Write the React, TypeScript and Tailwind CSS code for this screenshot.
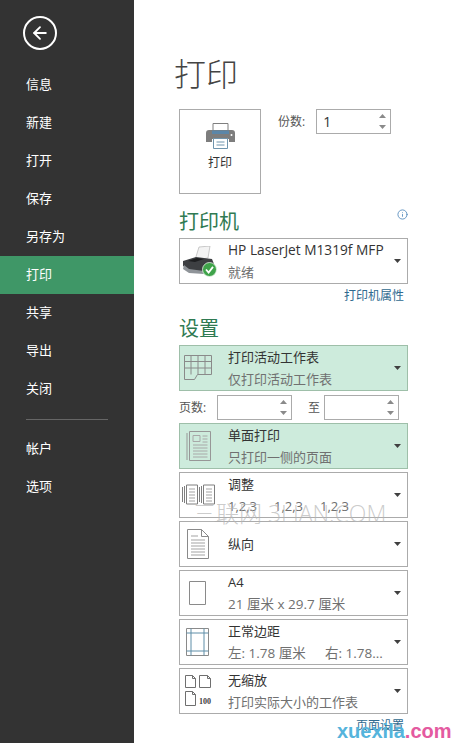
import { ReactNode } from 'react';
import { ArrowLeft, Info } from 'lucide-react';

const menuTop = ['信息', '新建', '打开', '保存', '另存为', '打印', '共享', '导出', '关闭'];
const menuBottom = ['帐户', '选项'];

function Caret({ className = '' }: { className?: string }) {
  return (
    <svg width="7" height="4" viewBox="0 0 7 4" className={className}>
      <path d="M0 0h7L3.5 4z" fill="#404040" />
    </svg>
  );
}

function Spinner() {
  return (
    <div className="flex flex-col items-center gap-[7px]">
      <svg width="7" height="4" viewBox="0 0 7 4"><path d="M3.5 0L7 4H0z" fill="#8a8a8a" /></svg>
      <svg width="7" height="4" viewBox="0 0 7 4"><path d="M0 0h7L3.5 4z" fill="#8a8a8a" /></svg>
    </div>
  );
}

function NumberBox({ value, className }: { value?: string; className: string }) {
  return (
    <div className={`flex h-[25px] items-center justify-between border border-[#ababab] bg-white pl-[6px] pr-[4px] text-[14px] text-[#333] ${className}`}>
      <span>{value}</span>
      <Spinner />
    </div>
  );
}

const line = '#8a8a8a';

function GridIcon() {
  return (
    <svg width="30" height="30" viewBox="0 0 30 30" fill="none" stroke={line}>
      <path d="M1.5 2.5h27v19h-14l-3 5h-10z M1.5 8.5h27 M1.5 15h27 M8 2.5v19 M15 2.5v19 M22 2.5v19" />
    </svg>
  );
}

function PagesIcon() {
  return (
    <svg width="26" height="32" viewBox="0 0 26 32" fill="none" stroke="#979797">
      <path d="M1 3v27 M3.5 1.5h21v29h-21z" />
      <path d="M7 5.5h7v6H7z M16.5 6h5 M16.5 9h5 M16.5 12h5 M7 15h14.5 M7 18h14.5 M7 21h14.5 M7 24h14.5 M7 27h14.5" stroke="#a8a8a8" />
    </svg>
  );
}

function StackedIcon() {
  return (
    <svg width="33" height="22" viewBox="0 0 33 22" fill="none" stroke="#7f7f7f">
      <path d="M.5 3v15 M2.5 2v17 M4.5 1h11v19h-11z M17.5 3v15 M19.5 2v17 M21.5 1h11v19h-11z" />
      <path d="M7 5h6 M7 8h6 M7 11h6 M7 14h6 M7 17h6 M24 5h6 M24 8h6 M24 11h6 M24 14h6 M24 17h6" stroke="#a3a3a3" />
    </svg>
  );
}

function PortraitIcon() {
  return (
    <svg width="22" height="30" viewBox="0 0 22 30" fill="none" stroke={line}>
      <path d="M.5.5h14l7 7v22H.5z M14.5.5v7h7" />
      <path d="M4 7h7 M4 11h14 M4 14h14 M4 17h14 M4 20h14 M4 23h14 M4 26h14" stroke="#a3a3a3" />
    </svg>
  );
}

function SheetIcon() {
  return (
    <svg width="17" height="24" viewBox="0 0 17 24" fill="none" stroke={line}>
      <path d="M.5.5h16v23H.5z" />
    </svg>
  );
}

function MarginIcon() {
  return (
    <svg width="23" height="28" viewBox="0 0 23 28" fill="none">
      <path d="M.5.5h22v27H.5z" stroke={line} />
      <path d="M5 .5v27 M18 .5v27 M.5 5h22 M.5 23h22" stroke="#5f8ea8" />
    </svg>
  );
}

function NoScaleIcon() {
  return (
    <div className="relative h-[32px] w-[29px]">
      <svg width="27" height="32" viewBox="0 0 27 32" fill="none" stroke="#6f6f6f">
        <path d="M.5.5h7l3 3v9H.5z M7.5.5v3h3 M14.5.5h8l3 3v9h-11z M22.5.5v3h3 M.5 16.5h7l3 3v11H.5z M7.5 16.5v3h3" />
      </svg>
      <span className="absolute bottom-[-1px] left-[14px] font-['Liberation_Serif',serif] text-[8px] font-bold text-[#404040]">100</span>
    </div>
  );
}

function PrinterPhoto() {
  return (
    <svg width="36" height="31" viewBox="0 0 36 31">
      <path d="M17 1l11-1-2 12-13 2z" fill="#f3f3f3" stroke="#b5b5b5" strokeWidth=".7" />
      <path d="M1 15l13-4 16 2 2 5-10 8-14-2-7-4z" fill="#3d3f42" />
      <path d="M2 19l5 4 15 2v3l-15-1-6-4z" fill="#8f9499" />
      <path d="M6 15l9-3 7 1-9 3z" fill="#1d1e20" />
      <circle cx="27.5" cy="23.5" r="7" fill="#3fa34a" stroke="#e8f4e8" strokeWidth=".8" />
      <path d="M24 23.5l2.6 3 4.4-5.6" fill="none" stroke="#fff" strokeWidth="1.8" />
    </svg>
  );
}

function PrintGlyph() {
  return (
    <svg width="29" height="26" viewBox="0 0 29 26">
      <path d="M7 .5h15v8H7z" fill="#fff" stroke="#7f7f7f" />
      <path d="M3 7h23a3 3 0 0 1 3 3v9h-6v-3H6v3H0v-9a3 3 0 0 1 3-3z" fill="#7d7d7d" />
      <path d="M6 7.5h17V11H6z" fill="#5b86a8" />
      <path d="M7.5 15.5h14v10h-14z" fill="#fff" stroke="#6f94ad" />
      <path d="M10.5 19h8 M10.5 22h8" stroke="#6f94ad" />
      <circle cx="25.5" cy="12" r="1" fill="#fff" />
    </svg>
  );
}

function Select({ icon, title, sub, active, iconClass = 'pl-[6px]' }: { icon: ReactNode; title: ReactNode; sub?: ReactNode; active?: boolean; iconClass?: string }) {
  return (
    <div className={`flex h-[46px] w-[229px] items-center border ${active ? 'border-[#9ebfa9] bg-[#cdebdc]' : 'border-[#ababab] bg-white'}`}>
      <div className={`flex w-[48px] shrink-0 items-center ${iconClass}`}>{icon}</div>
      <div className="min-w-0 flex-1 leading-[22px]">
        <div className="whitespace-nowrap text-[13px] text-[#333]">{title}</div>
        {sub && <div className="whitespace-nowrap text-[13px] text-[#707070]">{sub}</div>}
      </div>
      <Caret className="mr-[6px] shrink-0" />
    </div>
  );
}

export default function App() {
  return (
    <div className="relative flex h-[743px] w-[458px] overflow-hidden bg-white font-['Open_Sans','Noto_Sans_CJK_SC',sans-serif]">
      <aside className="flex w-[134px] shrink-0 flex-col bg-[#333333] text-[13px] text-white">
        <div className="flex h-[66px] items-start pl-[23px] pt-[16px]">
          <div className="flex h-[34px] w-[34px] items-center justify-center rounded-full border-2 border-white">
            <ArrowLeft size={20} strokeWidth={2.2} />
          </div>
        </div>
        {menuTop.map((m) => (
          <div key={m} className={`flex h-[38px] items-center pl-[26px] ${m === '打印' ? 'bg-[#3f9767]' : ''}`}>{m}</div>
        ))}
        <div className="mx-[26px] mt-[11px] h-px bg-[#666666]" />
        <div className="mt-[10px]">
          {menuBottom.map((m) => (
            <div key={m} className="flex h-[38px] items-center pl-[26px]">{m}</div>
          ))}
        </div>
      </aside>

      <main className="flex flex-1 flex-col pl-[45px]">
        <h1 className="-ml-[5px] h-[109px] pt-[52px] text-[32px] font-light leading-[44px] text-[#444]">打印</h1>

        <div className="flex">
          <div className="flex h-[85px] w-[82px] flex-col items-center border border-[#ababab] pt-[13px] text-[12px] text-[#333]">
            <PrintGlyph />
            <span className="mt-[5px]">打印</span>
          </div>
          <div className="ml-[17px] flex h-[25px] items-center text-[12px] text-[#555]">份数:</div>
          <NumberBox value="1" className="ml-[11px] w-[75px]" />
        </div>

        <div className="mt-[13px] flex h-[31px] w-[229px] items-start justify-between">
          <h2 className="text-[20px] leading-[30px] text-[#2f7a52]">打印机</h2>
          <Info size={11} className="mt-[2px] text-[#5b8fc0]" />
        </div>
        <Select icon={<PrinterPhoto />} title={<span className="text-[13.7px]">HP LaserJet M1319f MFP</span>} sub="就绪" iconClass="pl-[2px]" />
        <div className="flex h-[24px] w-[225px] items-center justify-end text-[12px] text-[#2f6a8f]">打印机属性</div>
        <h2 className="h-[37px] pt-[6px] text-[20px] leading-[30px] text-[#2f7a52]">设置</h2>
        <Select active icon={<GridIcon />} title="打印活动工作表" sub="仅打印活动工作表" iconClass="pl-[3px]" />

        <div className="flex h-[32px] items-start pt-[4px] text-[12px] text-[#555]">
          <span className="w-[38px] leading-[25px]">页数:</span>
          <NumberBox className="w-[75px]" />
          <span className="ml-[16px] w-[16px] leading-[25px]">至</span>
          <NumberBox className="w-[75px]" />
        </div>

        <div className="flex flex-col gap-[3px]">
          <Select active icon={<PagesIcon />} title="单面打印" sub="只打印一侧的页面" iconClass="pl-[6px]" />
          <Select
            icon={<StackedIcon />}
            title="调整"
            sub={
              <div className="flex">
                <span className="w-[46px]">1,2,3</span>
                <span className="w-[46px]">1,2,3</span>
                <span>1,2,3</span>
              </div>
            }
            iconClass="pl-[2px]"
          />
          <Select icon={<PortraitIcon />} title="纵向" iconClass="pl-[7px]" />
          <Select icon={<SheetIcon />} title="A4" sub={<span className="text-[13.5px]">21 厘米 x 29.7 厘米</span>} iconClass="pl-[9px]" />
          <Select
            icon={<MarginIcon />}
            title="正常边距"
            sub={
              <div className="flex text-[13.5px]">
                <span className="w-[97px]">左: 1.78 厘米</span>
                <span>右: 1.78...</span>
              </div>
            }
            iconClass="pl-[6px]"
          />
          <Select icon={<NoScaleIcon />} title="无缩放" sub="打印实际大小的工作表" iconClass="pl-[5px]" />
        </div>
        <div className="flex h-[24px] w-[225px] items-center justify-end text-[12px] text-[#2f6a8f]">页面设置</div>
      </main>

      {/* watermarks baked into the screenshot */}
      <div className="pointer-events-none absolute left-[193px] top-[498px] whitespace-nowrap text-[23px] font-light leading-[30px] text-[#b5b5b5]/70">三联网 3LIAN.COM</div>
      <div className="pointer-events-none absolute left-[337px] top-[720px] whitespace-nowrap font-['Liberation_Sans',sans-serif] text-[20px] font-bold leading-[22px]">
        <span className="text-[#55b4dc]">xuexila</span><span className="text-[#e45aa0]">.com</span>
      </div>
    </div>
  );
}
